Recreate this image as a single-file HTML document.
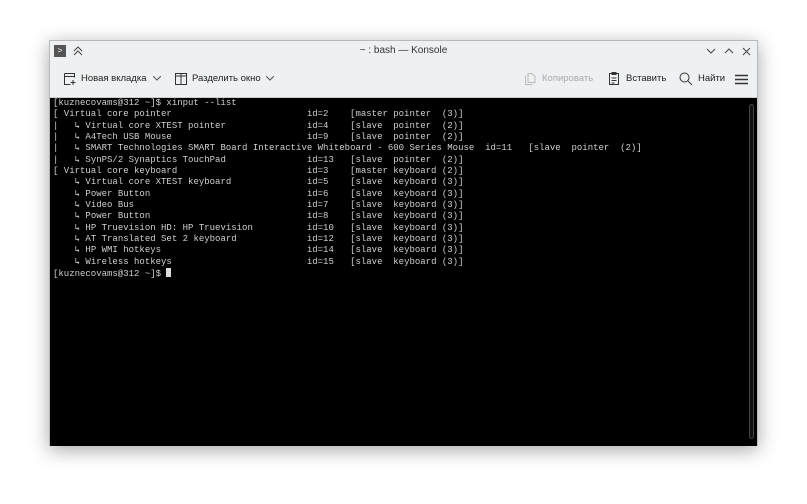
<!DOCTYPE html>
<html><head><meta charset="utf-8"><style>
*{margin:0;padding:0;box-sizing:border-box}
body{width:807px;height:504px;background:#fff;position:relative;overflow:hidden;font-family:"Liberation Sans","DejaVu Sans",sans-serif}
.win{position:absolute;left:49px;top:40px;width:709px;height:406px;background:#eff0f1;border:1px solid #b8b9ba;box-shadow:0 4px 18px rgba(0,0,0,.35)}
.title{position:absolute;top:0;left:0;right:0;height:20px;font-size:10px;color:#333;text-align:center;line-height:20px}
.tb{position:absolute;top:20px;left:0;right:0;height:36px;font-size:9.5px;color:#222}
.tb span{position:absolute;top:12px}
.term{position:absolute;left:0;top:56px;width:707px;height:349px;background:#000;border-top:1px solid #ccc}
pre{position:absolute;left:3px;top:0px;font-family:"Liberation Mono","DejaVu Sans Mono",monospace;font-size:9px;line-height:11.33px;color:#cfcfcf}
.cur{display:inline-block;width:5px;height:9px;background:#ddd;vertical-align:-1px}
.sb{position:absolute;right:3px;top:6px;width:5px;height:335px;border:1px solid #444;border-radius:3px;background:#111}
</style></head><body>
<div class="win">
 <div class="title">~ : bash — Konsole</div>
 <div style="position:absolute;left:4px;top:4px;width:12px;height:12px;background:#555;color:#fff;font-size:8px;line-height:12px;text-align:center">&gt;</div>
 <svg style="position:absolute;left:23px;top:5px" width="10" height="10" viewBox="0 0 10 10"><path d="M1 5l4-4 4 4M1 9l4-4 4 4" stroke="#444" fill="none"/></svg>
 <svg style="position:absolute;left:657px;top:6px" width="44" height="9" viewBox="0 0 44 9"><path d="M0 2l4 4 4-4M18 6l4-4 4 4M36 1l7 7M43 1l-7 7" stroke="#444" fill="none"/></svg>
 <div class="tb">
  <svg style="position:absolute;left:13px;top:11px" width="14" height="14" viewBox="0 0 14 14"><path d="M1.5 1.5h10v4M1.5 1.5v11h6M1.5 4.5h10M10 8v5M7.5 10.5h5" stroke="#333" fill="none"/></svg>
  <span style="left:31px">Новая вкладка</span>
  <svg style="position:absolute;left:103px;top:15px" width="8" height="5" viewBox="0 0 8 5"><path d="M0 0l4 4 4-4" stroke="#555" fill="none"/></svg>
  <svg style="position:absolute;left:124px;top:11px" width="14" height="14" viewBox="0 0 14 14"><rect x="1.5" y="1.5" width="11" height="11" stroke="#333" fill="none"/><path d="M7 1.5v11M1.5 4h11" stroke="#333"/></svg>
  <span style="left:142px">Разделить окно</span>
  <svg style="position:absolute;left:216px;top:15px" width="8" height="5" viewBox="0 0 8 5"><path d="M0 0l4 4 4-4" stroke="#555" fill="none"/></svg>
  <svg style="position:absolute;left:474px;top:11px" width="12" height="14" viewBox="0 0 12 14"><path d="M1.5 3.5v9h7M4 1.5h4l3 3v6H4z" stroke="#bbb" fill="none"/></svg>
  <span style="left:492px;color:#aaa">Копировать</span>
  <svg style="position:absolute;left:558px;top:10px" width="12" height="15" viewBox="0 0 12 15"><rect x="1.5" y="2.5" width="9" height="11" stroke="#333" fill="none"/><rect x="3.5" y="1" width="5" height="3" fill="#333"/><path d="M3.5 7h5M3.5 9.5h5M3.5 12h3" stroke="#333"/></svg>
  <span style="left:576px">Вставить</span>
  <svg style="position:absolute;left:629px;top:11px" width="14" height="14" viewBox="0 0 14 14"><circle cx="5.5" cy="5.5" r="4.5" stroke="#333" fill="none"/><path d="M9 9l4 4" stroke="#333"/></svg>
  <span style="left:648px">Найти</span>
  <svg style="position:absolute;left:685px;top:13px" width="13" height="11" viewBox="0 0 13 11"><path d="M0 1.5h13M0 5.5h13M0 9.5h13" stroke="#333" stroke-width="1.6"/></svg>
 </div>
 <div class="term">
<pre>[kuznecovams@312 ~]$ xinput --list
[ Virtual core pointer                         id=2    [master pointer  (3)]
|   ↳ Virtual core XTEST pointer               id=4    [slave  pointer  (2)]
|   ↳ A4Tech USB Mouse                         id=9    [slave  pointer  (2)]
|   ↳ SMART Technologies SMART Board Interactive Whiteboard - 600 Series Mouse  id=11   [slave  pointer  (2)]
|   ↳ SynPS/2 Synaptics TouchPad               id=13   [slave  pointer  (2)]
[ Virtual core keyboard                        id=3    [master keyboard (2)]
    ↳ Virtual core XTEST keyboard              id=5    [slave  keyboard (3)]
    ↳ Power Button                             id=6    [slave  keyboard (3)]
    ↳ Video Bus                                id=7    [slave  keyboard (3)]
    ↳ Power Button                             id=8    [slave  keyboard (3)]
    ↳ HP Truevision HD: HP Truevision          id=10   [slave  keyboard (3)]
    ↳ AT Translated Set 2 keyboard             id=12   [slave  keyboard (3)]
    ↳ HP WMI hotkeys                           id=14   [slave  keyboard (3)]
    ↳ Wireless hotkeys                         id=15   [slave  keyboard (3)]
[kuznecovams@312 ~]$ <span class="cur"></span></pre>
  <div class="sb"></div>
 </div>
</div>
</body></html>
